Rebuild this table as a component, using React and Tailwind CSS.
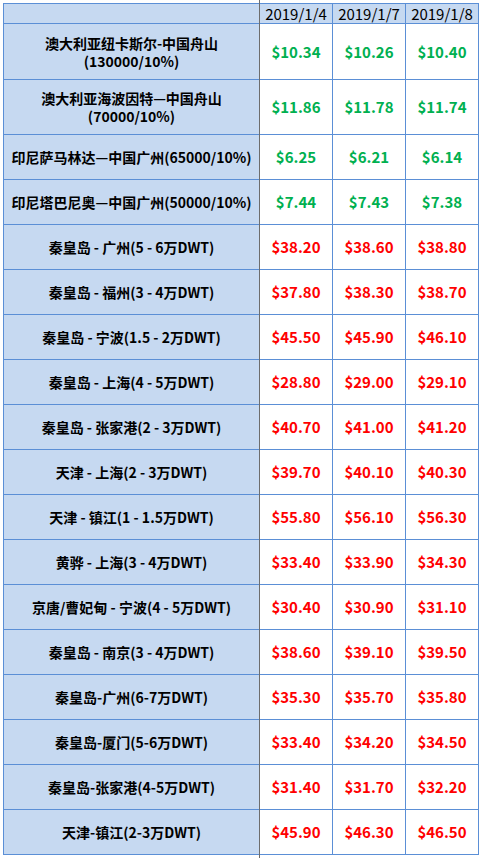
const rows = [
  { name: ['澳大利亚纽卡斯尔-中国舟山', '(130000/10%)'], v: ['$10.34', '$10.26', '$10.40'], up: false, h: 'h-[56px]' },
  { name: ['澳大利亚海波因特—中国舟山', '(70000/10%)'], v: ['$11.86', '$11.78', '$11.74'], up: false, h: 'h-[55px]' },
  { name: ['印尼萨马林达—中国广州(65000/10%)'], v: ['$6.25', '$6.21', '$6.14'], up: false },
  { name: ['印尼塔巴尼奥—中国广州(50000/10%)'], v: ['$7.44', '$7.43', '$7.38'], up: false },
  { name: ['秦皇岛 - 广州(5 - 6万DWT)'], v: ['$38.20', '$38.60', '$38.80'], up: true },
  { name: ['秦皇岛 - 福州(3 - 4万DWT)'], v: ['$37.80', '$38.30', '$38.70'], up: true },
  { name: ['秦皇岛 - 宁波(1.5 - 2万DWT)'], v: ['$45.50', '$45.90', '$46.10'], up: true },
  { name: ['秦皇岛 - 上海(4 - 5万DWT)'], v: ['$28.80', '$29.00', '$29.10'], up: true },
  { name: ['秦皇岛 - 张家港(2 - 3万DWT)'], v: ['$40.70', '$41.00', '$41.20'], up: true },
  { name: ['天津 - 上海(2 - 3万DWT)'], v: ['$39.70', '$40.10', '$40.30'], up: true },
  { name: ['天津 - 镇江(1 - 1.5万DWT)'], v: ['$55.80', '$56.10', '$56.30'], up: true },
  { name: ['黄骅 - 上海(3 - 4万DWT)'], v: ['$33.40', '$33.90', '$34.30'], up: true },
  { name: ['京唐/曹妃甸 - 宁波(4 - 5万DWT)'], v: ['$30.40', '$30.90', '$31.10'], up: true },
  { name: ['秦皇岛 - 南京(3 - 4万DWT)'], v: ['$38.60', '$39.10', '$39.50'], up: true },
  { name: ['秦皇岛-广州(6-7万DWT)'], v: ['$35.30', '$35.70', '$35.80'], up: true },
  { name: ['秦皇岛-厦门(5-6万DWT)'], v: ['$33.40', '$34.20', '$34.50'], up: true },
  { name: ['秦皇岛-张家港(4-5万DWT)'], v: ['$31.40', '$31.70', '$32.20'], up: true },
  { name: ['天津-镇江(2-3万DWT)'], v: ['$45.90', '$46.30', '$46.50'], up: true },
];

const dates = ['2019/1/4', '2019/1/7', '2019/1/8'];

export default function App() {
  return (
    <div
      className="relative w-[482px] h-[858px] overflow-hidden bg-white pt-[3px] pl-[3px] text-black"
      style={{ fontFamily: '"Noto Sans CJK SC", "Noto Sans", sans-serif' }}
    >
      <div className="grid grid-cols-[256px_73px_73px_73px] w-[476px] border-l border-t border-[#5b8fd6]">
        <div className="h-[20px] bg-[#c6d9f1] border-r border-b border-[#5b8fd6]" />
        {dates.map((d) => (
          <div key={d} className="h-[20px] overflow-hidden bg-[#c6d9f1] border-r border-b border-[#5b8fd6] flex items-center justify-center text-[15px] leading-[18px]">
            {d}
          </div>
        ))}
        {rows.map((r, i) => {
          const h = r.h || 'h-[45px]';
          return [
            <div key={'n' + i} className={`${h} overflow-hidden bg-[#c6d9f1] border-r border-b border-[#5b8fd6] flex flex-col items-center justify-center text-[14px] font-bold leading-[18px]`}>
              {r.name.map((t) => <span key={t}>{t}</span>)}
            </div>,
            ...r.v.map((v, j) => (
              <div key={'v' + i + j} className={`${h} overflow-hidden bg-white border-r border-b border-[#5b8fd6] flex items-center justify-center text-[15px] font-bold leading-[20px] ${r.up ? 'text-[#ff0000]' : 'text-[#00b050]'}`}>
                {v}
              </div>
            )),
          ];
        })}
      </div>
      <div className="absolute left-[259px] top-0 w-px h-full bg-[#6d6d6d]" />
    </div>
  );
}
